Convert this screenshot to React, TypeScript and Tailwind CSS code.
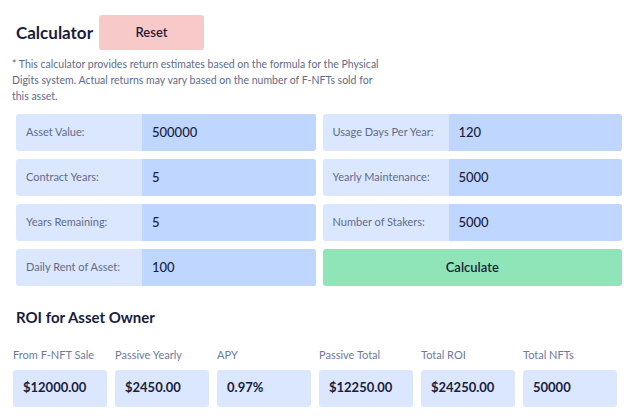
import React from 'react'

const INPUTS: { label: string; value: string }[][] = [
  [
    { label: 'Asset Value:', value: '500000' },
    { label: 'Contract Years:', value: '5' },
    { label: 'Years Remaining:', value: '5' },
    { label: 'Daily Rent of Asset:', value: '100' },
  ],
  [
    { label: 'Usage Days Per Year:', value: '120' },
    { label: 'Yearly Maintenance:', value: '5000' },
    { label: 'Number of Stakers:', value: '5000' },
  ],
]

const RESULTS = [
  { label: 'From F-NFT Sale', value: '$12000.00' },
  { label: 'Passive Yearly', value: '$2450.00' },
  { label: 'APY', value: '0.97%' },
  { label: 'Passive Total', value: '$12250.00' },
  { label: 'Total ROI', value: '$24250.00' },
  { label: 'Total NFTs', value: '50000' },
]

function Field({ label, value }: { label: string; value: string }) {
  return (
    <div className="flex h-[37px] rounded-[3px] overflow-hidden bg-[#dbe7fe]">
      <div className="w-[126px] shrink-0 flex items-center pl-[10px] text-[11px] text-[#5f6b8c]">{label}</div>
      <div className="flex-1 flex items-center pl-[10px] bg-[#bfd7fe] text-[13px] font-medium text-[#1a1d3d]">{value}</div>
    </div>
  )
}

export default function App() {
  return (
    <div className="w-[632px] h-[419px] bg-white font-['Lato','Open_Sans',sans-serif] text-[#1a1d3d]">
      <div className="flex items-center pt-[15px] pl-[16px]">
        <h1 className="text-[17px] font-bold w-[83px]">Calculator</h1>
        <button className="w-[105px] h-[35px] rounded-[3px] bg-[#f8c9c9] text-[13px] font-semibold text-[#1a1d3d]">
          Reset
        </button>
      </div>
      <p className="mt-[6px] pl-[12px] w-[384px] text-[10.5px] leading-[16px] text-[#5f6b8c]">
        * This calculator provides return estimates based on the formula for the Physical Digits system. Actual returns may vary based on the number of F-NFTs sold for this asset.
      </p>

      <div className="grid grid-cols-2 gap-x-[7px] mt-[10px] pl-[16px] w-[622px]">
        <div className="flex flex-col gap-[8px]">
          {INPUTS[0].map((f) => (
            <Field key={f.label} {...f} />
          ))}
        </div>
        <div className="flex flex-col gap-[8px]">
          {INPUTS[1].map((f) => (
            <Field key={f.label} {...f} />
          ))}
          <button className="h-[37px] rounded-[3px] bg-[#8fe5b7] text-[13px] font-semibold text-[#1a1d3d]">
            Calculate
          </button>
        </div>
      </div>

      <h2 className="mt-[20px] pl-[16px] text-[15px] font-bold">ROI for Asset Owner</h2>

      <div className="flex gap-[8px] pl-[13px] mt-[19px]">
        {RESULTS.map((r) => (
          <div key={r.label} className="w-[94px]">
            <p className="text-[11px] leading-[14px] text-[#6b7a9e]">{r.label}</p>
            <div className="mt-[8px] h-[37px] rounded-[3px] bg-[#dbe7fe] flex items-center pl-[10px] text-[13px] font-bold">
              {r.value}
            </div>
          </div>
        ))}
      </div>
    </div>
  )
}
